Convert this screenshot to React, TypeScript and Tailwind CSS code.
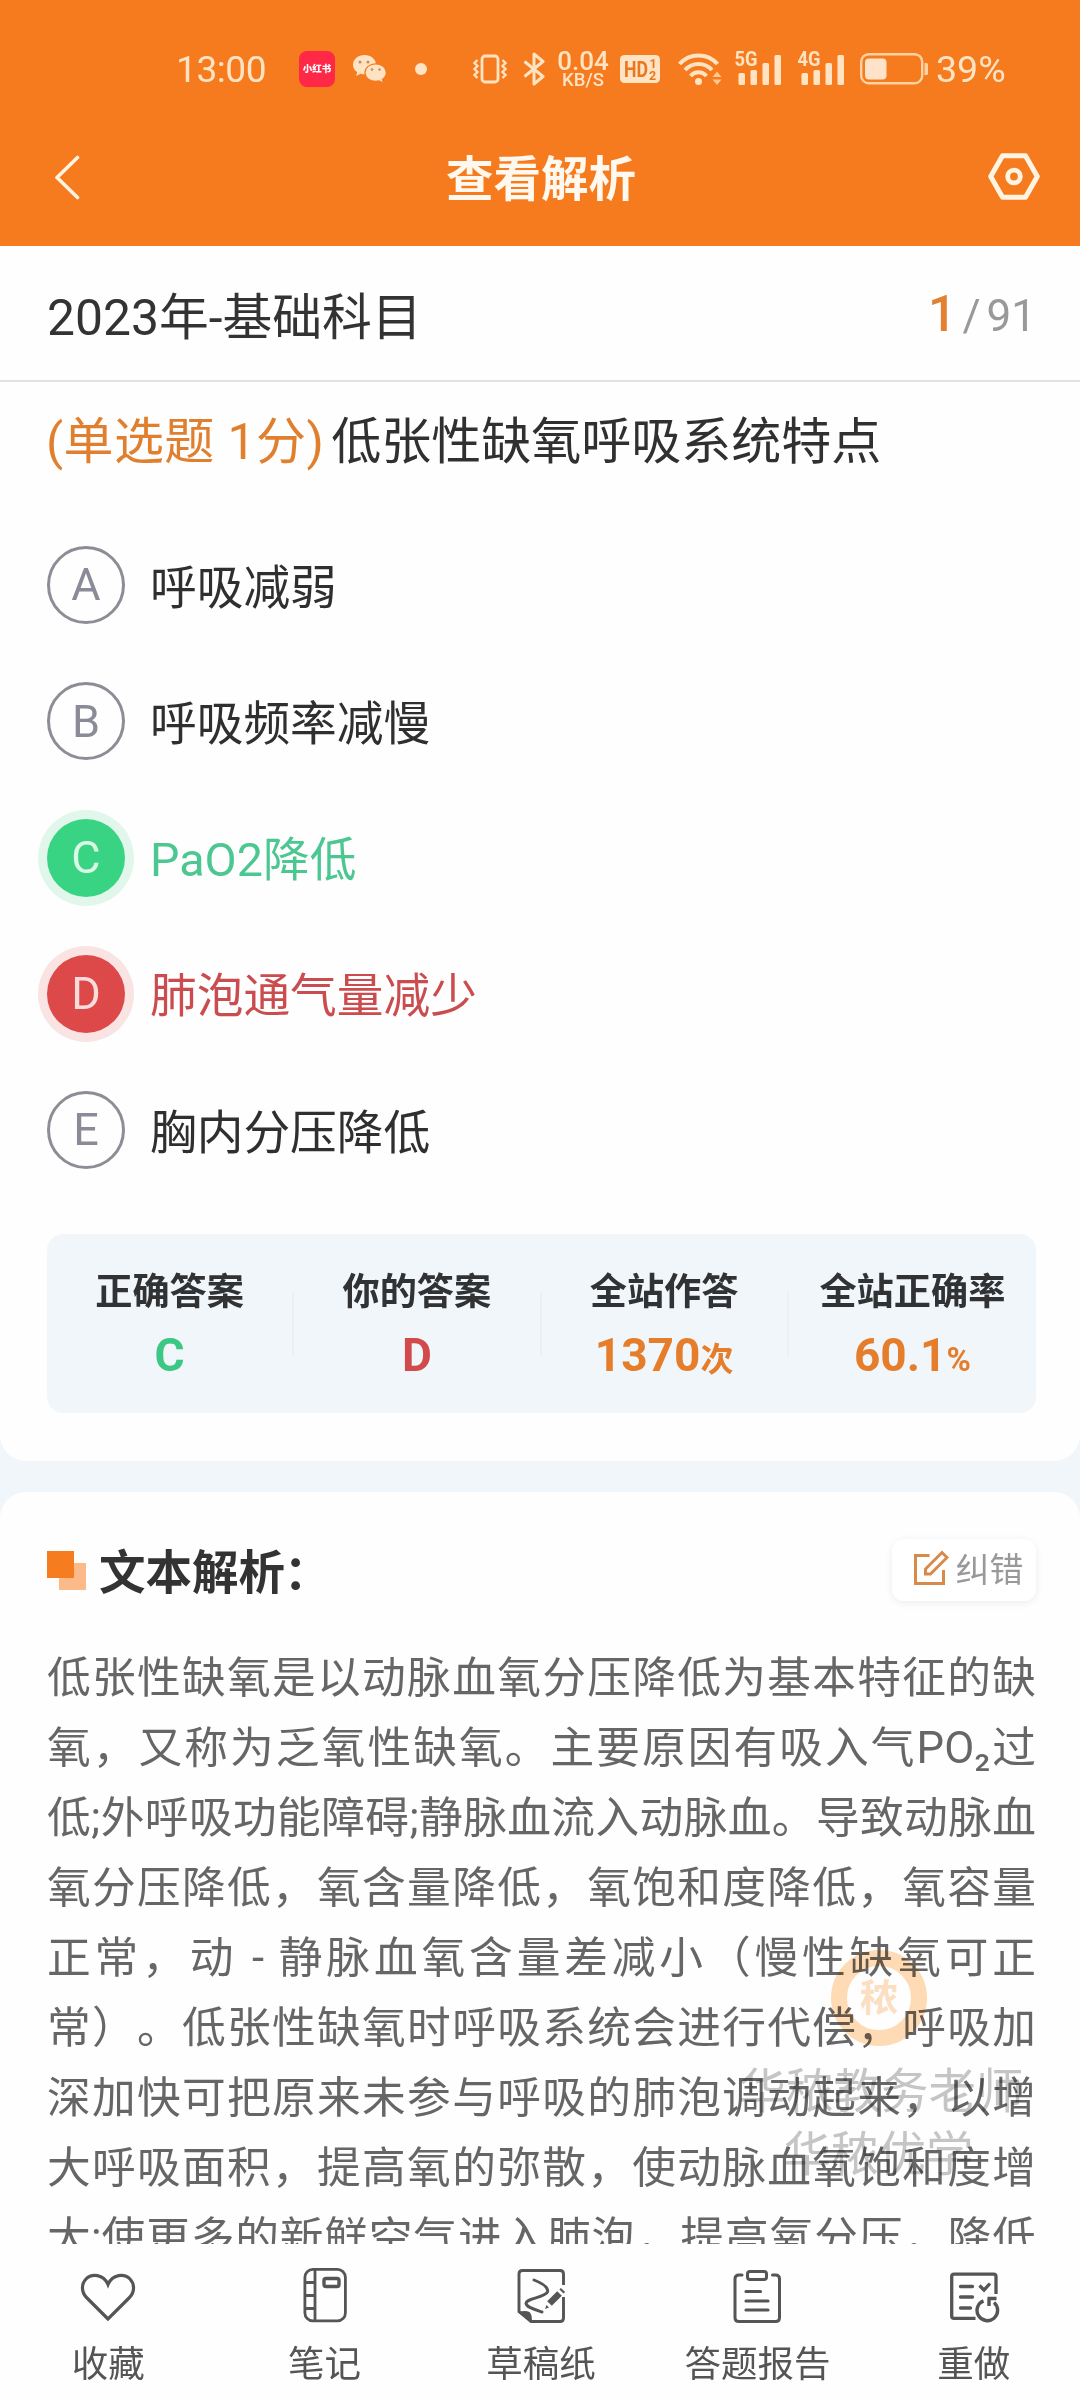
import { ReactNode } from 'react';

type OptionState = 'normal' | 'correct' | 'wrong';

interface Option {
  key: string;
  text: string;
  state: OptionState;
}

const options: Option[] = [
  { key: 'A', text: '呼吸减弱', state: 'normal' },
  { key: 'B', text: '呼吸频率减慢', state: 'normal' },
  { key: 'C', text: 'PaO2降低', state: 'correct' },
  { key: 'D', text: '肺泡通气量减少', state: 'wrong' },
  { key: 'E', text: '胸内分压降低', state: 'normal' },
];

const stats = [
  { label: '正确答案', value: 'C', unit: '', color: 'text-[#3cc784]' },
  { label: '你的答案', value: 'D', unit: '', color: 'text-[#d24a4b]' },
  { label: '全站作答', value: '1370', unit: '次', color: 'text-[#e57d2a]' },
  { label: '全站正确率', value: '60.1', unit: '%', color: 'text-[#e57d2a]' },
];

const analysis = [
  '低张性缺氧是以动脉血氧分压降低为基本特征的缺',
  '氧，又称为乏氧性缺氧。主要原因有吸入气PO₂过',
  '低;外呼吸功能障碍;静脉血流入动脉血。导致动脉血',
  '氧分压降低，氧含量降低，氧饱和度降低，氧容量',
  '正常，动 - 静脉血氧含量差减小（慢性缺氧可正',
  '常）。低张性缺氧时呼吸系统会进行代偿，呼吸加',
  '深加快可把原来未参与呼吸的肺泡调动起来，以增',
  '大呼吸面积，提高氧的弥散，使动脉血氧饱和度增',
  '大;使更多的新鲜空气进入肺泡，提高氧分压，降低',
];

function getCircleStyle(state: OptionState) {
  switch (state) {
    case 'correct': return 'bg-[#38d484] text-[#d9f8e6] ring-[9px] ring-[#e2f7ec]';
    case 'wrong': return 'bg-[#dd4848] text-[#fbdcdc] ring-[9px] ring-[#fae4e3]';
    default: return 'border-[3px] border-[#8c8d95] text-[#8a8b96]';
  }
}

function getTextStyle(state: OptionState) {
  switch (state) {
    case 'correct': return 'text-[#4cc791]';
    case 'wrong': return 'text-[#cb4c4e]';
    default: return 'text-[#2f2f2f]';
  }
}

function Signal({ label }: { label: string }) {
  return (
    <svg className="overflow-visible" width="47" height="34" viewBox="0 0 47 34" fill="#ffe3c3">
      <text x="-0.5" y="15" fontSize="20.5" fontWeight="700" textLength="23" lengthAdjust="spacingAndGlyphs" fontFamily="Roboto, sans-serif">{label}</text>
      <rect x="3.5" y="22" width="6.5" height="12" rx="1.5" />
      <rect x="15.5" y="19" width="6.5" height="15" rx="1.5" />
      <rect x="27.5" y="12" width="6.5" height="22" rx="1.5" />
      <rect x="39.5" y="4" width="6.5" height="30" rx="1.5" />
    </svg>
  );
}

function StatusBar() {
  return (
    <div className="flex h-[138px] items-center pl-[176px] text-[#ffe3c3]">
      <span className="w-[91px] pt-px text-[37px] tracking-[-0.4px] whitespace-nowrap">13:00</span>
      <div className="ml-8 flex h-9 w-9 items-center justify-center rounded-lg bg-[#ff2846] text-[9.5px] font-black whitespace-nowrap text-white">
        小红书
      </div>
      <svg className="ml-[18px]" width="34" height="30" viewBox="0 0 34 30">
        <path d="M11.5 1C5.200 1 0 5.200 0 10.700c0 3 1.600 5.600 4.200 7.400L3.200 22l4.400-2.300c1.300.4 2.600.6 3.900.6C17.800 20.300 23 16.200 23 10.700S17.800 1 11.500 1z" fill="#ffe3c3" />
        <path d="M22.600 9.800c-5.900 0-10.600 3.900-10.600 8.800s4.700 8.800 10.600 8.800c1.300 0 2.500-.2 3.600-.5l4.200 2.300-1-3.700c2.400-1.600 3.900-4.100 3.900-6.900 0-4.900-4.800-8.800-10.700-8.800z" fill="#ffe3c3" stroke="#f47b1f" strokeWidth="1.200" />
        <g fill="#c98b62">
          <circle cx="7" cy="8" r="1.500" />
          <circle cx="15" cy="8" r="1.500" />
          <circle cx="19" cy="15.500" r="1.300" />
          <circle cx="26.500" cy="15.500" r="1.300" />
        </g>
      </svg>
      <div className="ml-7 h-3 w-3 rounded-full bg-[#ffe3c3]" />
      <svg className="ml-[46px]" width="34" height="30" viewBox="0 0 34 30" fill="none" stroke="#ffe3c3" strokeWidth="2.800">
        <rect x="9" y="2" width="16" height="26" rx="3" />
        <path d="M4.500 6l-3 3 3 3-3 3 3 3-3 3 3 3M29.500 6l3 3-3 3 3 3-3 3 3 3-3 3" strokeWidth="2.400" />
      </svg>
      <svg className="ml-4" width="22" height="34" viewBox="0 0 22 34" fill="none" stroke="#ffe3c3" strokeWidth="3" strokeLinejoin="round">
        <path d="M1.500 9.500L20 24.500L11 32V2l9 7.500L1.500 24.500" />
      </svg>
      <div className="ml-[11px] flex w-[54px] flex-col items-center pt-[2px] font-medium whitespace-nowrap">
        <span className="text-[26px] leading-[21px]">0.04</span>
        <span className="text-[18.500px] leading-[17px]">KB/S</span>
      </div>
      <svg className="ml-[10px]" width="40" height="28" viewBox="0 0 40 28">
        <rect width="40" height="28" rx="4.500" fill="#ffe3c3" />
        <g fill="#e9771f" fontFamily="Roboto, sans-serif" fontWeight="700">
          <text x="4" y="22" fontSize="22" textLength="24" lengthAdjust="spacingAndGlyphs">HD</text>
          <text x="29.500" y="13" fontSize="12.500">1</text>
          <text x="29" y="25" fontSize="12.500">2</text>
        </g>
      </svg>
      <svg className="ml-[18px]" width="44" height="34" viewBox="0 0 44 34" fill="none" stroke="#ffe3c3" strokeWidth="4">
        <path d="M1.500 12C11.500.5 29.500.5 39.500 12" />
        <path d="M7 18C14.500 10 26.500 10 34 18" />
        <path d="M12.500 24C17 19 24 19 28.500 24" />
        <circle cx="20.500" cy="29.500" r="3.500" fill="#ffe3c3" stroke="none" />
        <path d="M34.500 25l4.500-5.500 4.500 5.500zM34.500 27.500l4.500 5.500 4.500-5.500z" fill="#ffc88f" stroke="none" />
      </svg>
      <div className="-mt-[2px] ml-[13px]"><Signal label="5G" /></div>
      <div className="-mt-[2px] ml-4"><Signal label="4G" /></div>
      <svg className="ml-[15px]" width="68" height="32" viewBox="0 0 68 32">
        <rect x="1.200" y="1.200" width="61" height="29" rx="7.500" fill="none" stroke="#ffd2a2" strokeWidth="2.400" />
        <rect x="5" y="5.500" width="21.500" height="21" rx="4" fill="#ffe3c9" />
        <path d="M64.500 10h2q1.500 0 1.500 1.500v9q0 1.500-1.500 1.500h-2z" fill="#ffd2a2" />
      </svg>
      <span className="ml-[8px] pt-px text-[37.500px] whitespace-nowrap">39%</span>
    </div>
  );
}

function NavBar() {
  return (
    <div className="flex h-[108px] items-start justify-between pr-[40px] pl-[54px]">
      <svg className="mt-[17px]" width="68" height="45" viewBox="0 0 68 45" fill="none" stroke="#fff4e2" strokeWidth="3.600" strokeLinecap="round" strokeLinejoin="round">
        <path d="M23.500 2.500L3 22.500L23.500 42.500" />
      </svg>
      <h1 className="mt-[7px] text-[47.500px] leading-[70px] font-bold text-[#fff8ee]">查看解析</h1>
      <div className="flex w-[80px] justify-end">
        <svg className="mt-[15px]" width="52" height="47" viewBox="0 0 52 47" fill="none" stroke="#fff4e2" strokeLinejoin="round">
          <path d="M14.500 2.700h23L49.300 23.500 37.500 44.300h-23L2.700 23.500z" strokeWidth="5" />
          <circle cx="26" cy="23.500" r="6.300" strokeWidth="4.800" />
        </svg>
      </div>
    </div>
  );
}

const tabs: { label: string; icon: ReactNode }[] = [
  {
    label: '收藏',
    icon: (
      <svg width="56" height="56" viewBox="0 0 56 56" fill="none" stroke="#555" strokeWidth="3.200" strokeLinejoin="miter">
        <path d="M28 52L6.500 30.500C1.200 25.200 1.200 17 6 12C11.500 6.400 23.500 6.800 28 17.500C32.500 6.800 44.500 6.400 50 12C54.800 17 54.800 25.200 49.500 30.500Z" />
      </svg>
    ),
  },
  {
    label: '笔记',
    icon: (
      <svg width="56" height="56" viewBox="0 0 56 56" fill="none" stroke="#555" strokeWidth="2.800">
        <rect x="7.900" y="2.400" width="40.500" height="51.500" rx="8" />
        <path d="M18 2.400V54M8 15.500H18M8 28.500H18M8 41.500H18" />
        <rect x="27" y="11.500" width="15" height="8" rx="2" strokeWidth="3.400" />
      </svg>
    ),
  },
  {
    label: '草稿纸',
    icon: (
      <svg width="56" height="56" viewBox="0 0 56 56" fill="none" stroke="#555" strokeWidth="2.900">
        <path d="M50.500 18V7q0-3.500-3.500-3.500H9.500Q6 3.500 6 7V44.500L18 54.500H47q3.500 0 3.500-3.500V30" />
        <path d="M5 45.500q6.500-2.500 11.500-.5 2.500 2 2.500 10z" fill="#555" stroke="none" />
        <path d="M21 13C31 17 36 20.500 34.500 25C31 31 13.500 31 13 36.500C13.500 40 20 42 29 45" strokeLinecap="round" />
        <path d="M36.500 36.500L46.500 26.500" strokeWidth="6.600" />
        <path d="M48.500 24.500l1.500-1.500" strokeWidth="6" />
        <path d="M32 42l1.500-4 2.500 2.500z" fill="#555" stroke="none" />
      </svg>
    ),
  },
  {
    label: '答题报告',
    icon: (
      <svg width="56" height="56" viewBox="0 0 56 56" fill="none" stroke="#555" strokeWidth="3">
        <path d="M13 8H10q-4 0-4 4V50.500q0 4 4 4H46.500q4 0 4-4V12q0-4-4-4H43.500" strokeLinecap="round" />
        <rect x="18.500" y="4.500" width="19" height="8" rx="2.500" />
        <path d="M17 24.500H31.500M17 34H39M17 43H39" strokeLinecap="round" strokeWidth="3.200" />
      </svg>
    ),
  },
  {
    label: '重做',
    icon: (
      <svg width="56" height="56" viewBox="0 0 56 56" fill="none" stroke="#555" strokeWidth="3.300">
        <path d="M50 27V9.500Q50 7.200 47.700 7.200H8Q5.700 7.200 5.700 9.500V49Q5.700 51.300 8 51.300H29.500" />
        <path d="M14.500 19.500H26.500M14.500 30H26.500M14.500 41H24.500" strokeLinecap="round" />
        <path d="M33.500 18.500L38 23L44 16.500" />
        <path d="M37.500 33.800A10.300 10.300 0 1 0 48 35.500" strokeWidth="3.400" />
        <path d="M41.500 31.500H50.500M43 31.500V39" strokeWidth="3.400" />
      </svg>
    ),
  },
];

// translucent stamp laid over the explanation text
function Watermark() {
  return (
    <div className="pointer-events-none absolute top-[458px] right-[55px] flex w-[288px] flex-col items-center mix-blend-multiply">
      <div className="ml-[-4px] flex h-[96px] w-[96px] items-center justify-center rounded-full border-[16px] border-[#ffdcb5] text-[38px] font-bold text-[#fde0c4]">
        秾
      </div>
      <div className="mt-[15px] text-[47.500px] leading-[63px] whitespace-nowrap text-[#c6c6c6]">华秾教务老师</div>
      <div className="-ml-[5px] text-[47.500px] leading-[63px] whitespace-nowrap text-[#c6c6c6]">华秾优学</div>
    </div>
  );
}

export default function App() {
  return (
    <main className="flex h-[2400px] w-[1080px] flex-col overflow-hidden bg-[#f1f6fa] font-[Roboto,'Noto_Sans_CJK_SC',sans-serif]">
      <header className="h-[246px] shrink-0 bg-[#f67b1e]">
        <StatusBar />
        <NavBar />
      </header>

      {/* Question */}
      <section className="h-[1215px] shrink-0 rounded-b-[26px] bg-[#fefefe]">
        <div className="flex h-[136px] items-center justify-between border-b-2 border-[#e2e2e2] pr-[44px] pl-[47px]">
          <span className="pt-[11px] text-[49.800px] text-[#333]">2023年-基础科目</span>
          <div className="flex items-baseline pt-[2px] text-[44px] text-[#999]">
            <span className="text-[50px] font-medium text-[#e2812f]">1</span>
            <span className="mr-[6px] ml-[6px]">/</span>
            <span>91</span>
          </div>
        </div>

        <p className="mt-[24px] flex pl-[46px] text-[50px] leading-[72px] whitespace-pre text-[#303030]">
          <span className="mr-[7px] tracking-[0.4px] text-[#e0802f]">(单选题 1分)</span>
          <span>低张性缺氧呼吸系统特点</span>
        </p>

        <ul className="mt-[39px]">
          {options.map((option) => (
            <li key={option.key} className="flex h-[136.250px] items-center pl-[47px]">
              <span className={`flex h-[78px] w-[78px] items-center justify-center rounded-full text-[45px] ${getCircleStyle(option.state)}`}>
                {option.key}
              </span>
              <span className={`ml-[25px] pt-[5px] text-[46.700px] ${getTextStyle(option.state)}`}>{option.text}</span>
            </li>
          ))}
        </ul>

        <div className="mx-[47px] mt-[36px] grid h-[179px] w-[989px] grid-cols-4 items-center divide-x-2 divide-[#ebf0f3] rounded-2xl bg-[#f1f6fa]">
          {stats.map((stat) => (
            <div key={stat.label} className="flex h-[64px] flex-col items-center justify-center pt-[9px]">
              <span className="text-[37.200px] leading-[54px] font-bold whitespace-nowrap text-[#303234]">{stat.label}</span>
              <span className={`mt-[4px] text-[46px] leading-[64px] font-bold whitespace-nowrap ${stat.color}`}>
                {stat.value}
                <span className="text-[33px]">{stat.unit}</span>
              </span>
            </div>
          ))}
        </div>
      </section>

      {/* Explanation */}
      <section className="relative mt-[31px] h-[752px] shrink-0 overflow-hidden rounded-t-[26px] bg-[#fefefe] pr-[44px] pl-[47px]">
        <div className="flex h-[112px] items-center justify-between pt-[44px]">
          <div className="flex items-center">
            <svg width="39" height="39" viewBox="0 0 39 39">
              <rect x="12" y="12" width="27" height="27" fill="#fcb98a" />
              <rect width="27" height="27" fill="#f57c1f" />
            </svg>
            <h2 className="ml-[13px] pt-[5px] text-[46.500px] leading-[68px] font-bold text-[#333]">
              文本解析<span className="-ml-px">：</span>
            </h2>
          </div>
          <button className="flex h-[62px] w-[144px] items-center justify-center rounded-xl bg-white pl-[8px] text-[34px] text-[#999] shadow-[0_2px_8px_rgba(0,0,0,0.07)]">
            <svg className="mr-[7px] mb-[4px]" width="36" height="36" viewBox="0 0 36 36" fill="none" stroke="#d98a49" strokeWidth="3">
              <path d="M16.500 5.500H2.500V33.500H30.500V20" />
              <path d="M12.500 19L29 2.500L34 7.500L17.500 24H12.500Z" />
            </svg>
            纠错
          </button>
        </div>

        <div className="mt-[39px] text-[43.700px] leading-[70px] whitespace-nowrap text-[#666] [text-align-last:justify] [text-spacing-trim:space-all]">
          {analysis.map((line, i) => (
            <p key={i}>{line}</p>
          ))}
        </div>

        <Watermark />
      </section>

      {/* Bottom actions */}
      <nav className="-mr-[2px] grid h-[156px] shrink-0 grid-cols-5 bg-[#fefefe] text-[36.500px] text-[#555]">
        {tabs.map((tab) => (
          <button key={tab.label} className="flex flex-col items-center pt-[23px]">
            {tab.icon}
            <span className="mt-[15px] leading-[54px]">{tab.label}</span>
          </button>
        ))}
      </nav>
    </main>
  );
}
